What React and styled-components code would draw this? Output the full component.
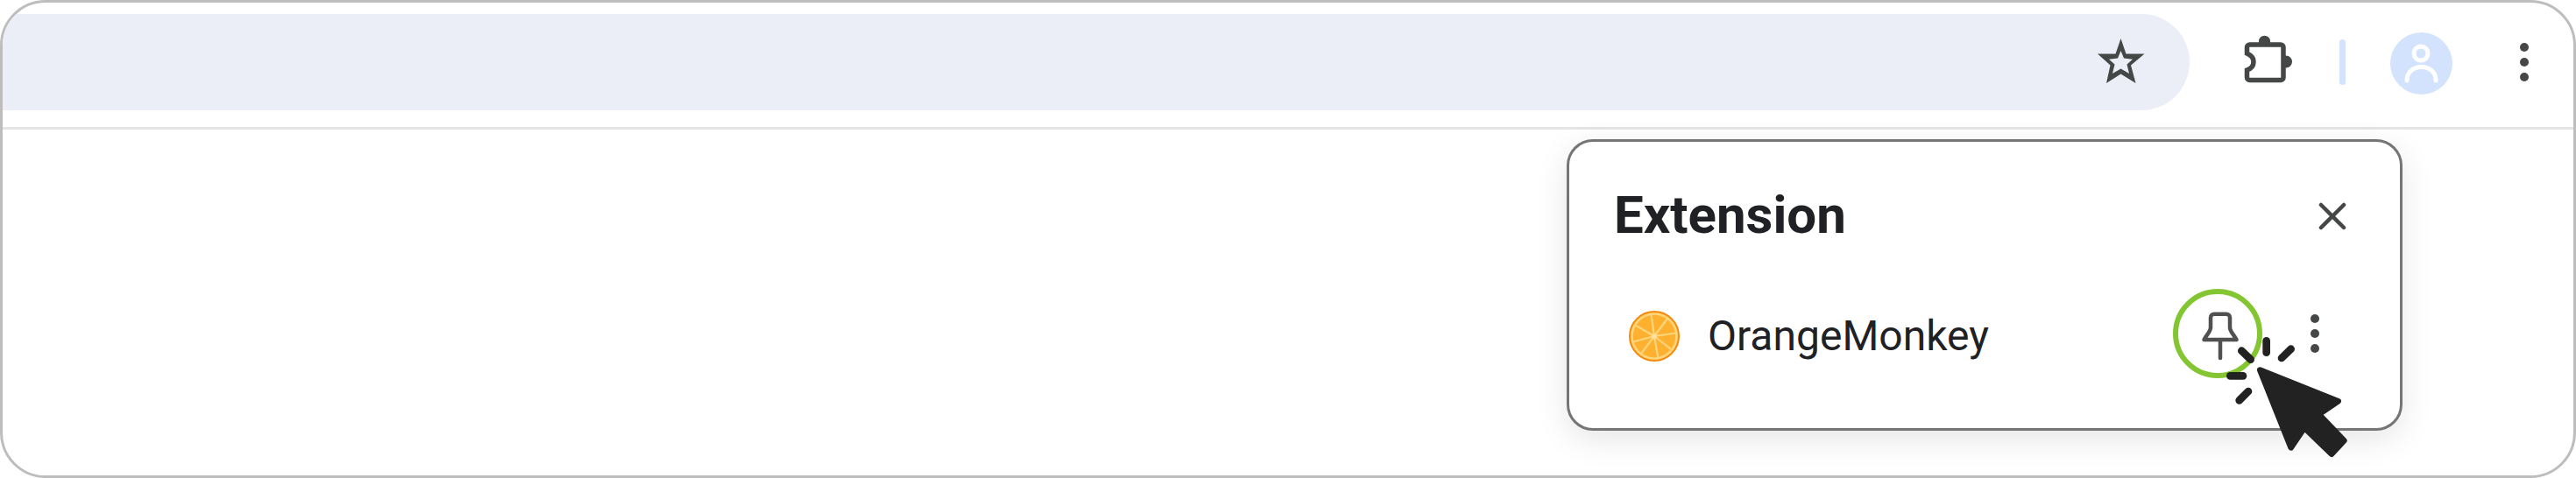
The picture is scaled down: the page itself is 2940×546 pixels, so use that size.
import styled, { createGlobalStyle } from "styled-components";

const GlobalStyle = createGlobalStyle`
 body {
  margin: 0;
  background: #fff;
  font-family: Roboto, "Liberation Sans", sans-serif;
 }
`;

const ORANGE_LINES = [-8, 37, 82, 128, 170, 217, 255, 300];
const SPARKS = [
 [355, 272, 386, 302],
 [440, 238, 440, 278],
 [492, 297, 524, 266],
 [316, 358, 360, 358],
 [347, 442, 378, 411],
];

const StarIcon = () => (
 <StarSvg viewBox="0 6 60 70">
  <path
   fillRule="evenodd"
   d="M30.5 14L36.5 31.5H57.5L42 44.5L47.5 65L30.5 54.5L14 65L18.5 44.5L4 31.5H24.5ZM30.5 28L27 36.5L17 37.7L23.5 43.5L21 54L30.5 48.5L40 54L37.5 43.5L44 37.7L34 36.5Z"
  />
 </StarSvg>
);

const PuzzleIcon = () => (
 <PuzzleSvg viewBox="0 1 90 80">
  <path
   className="shape"
   d="M27.5 21H63a3 3 0 0 1 3 3V58.5a3 3 0 0 1 -3 3H27.5a3 3 0 0 1 -3 -3V50C29 48.5 32 45.5 32 40.5C32 35.5 29 33 24.5 31V24a3 3 0 0 1 3 -3Z"
  />
  <path className="nub" d="M38 21V17.2a6.5 6.5 0 0 1 13 0V21Z" />
  <path className="nub" d="M66 33.5H69a7 7 0 0 1 0 14H66Z" />
 </PuzzleSvg>
);

const ProfileIcon = () => (
 <ProfileSvg viewBox="0 0 71 71">
  <circle cx="35" cy="24" r="8" />
  <path d="M19 55C19 45.5 26 39.5 35.5 39.5C45 39.5 52 45.5 52 55" />
 </ProfileSvg>
);

const OrangeIcon = () => (
 <OrangeSvg viewBox="0 0 60 60">
  <circle cx="30" cy="30" r="28" fill="#ffb02e" stroke="#f78a0c" strokeWidth="2" />
  <circle cx="30" cy="30" r="25.5" fill="none" stroke="#ffd67c" strokeWidth="2.6" />
  {ORANGE_LINES.map((deg) => {
   const rad = (deg * Math.PI) / 180;
   return (
    <line
     key={deg}
     x1="30"
     y1="30"
     x2={30 + 25 * Math.sin(rad)}
     y2={30 - 25 * Math.cos(rad)}
     stroke="#ffd67c"
     strokeWidth="2.2"
    />
   );
  })}
  <circle cx="30" cy="30" r="3" fill="#ffe09a" />
 </OrangeSvg>
);

const PinIcon = () => (
 <PinSvg viewBox="0 0 54 64">
  <path d="M23 9.7H37a4 4 0 0 1 4 4V25C41 30 45.5 33 48.5 39H11.5C14.5 33 19 30 19 25V13.7a4 4 0 0 1 4 -4Z" />
  <path d="M30 40V60" />
 </PinSvg>
);

const CloseIcon = () => (
 <CloseSvg viewBox="0 0 32 32">
  <path d="M3 3L29 29M29 3L3 29" />
 </CloseSvg>
);

const ClickCursor = () => (
 <CursorSvg viewBox="0 0 900 708">
  {SPARKS.map(([x1, y1, x2, y2]) => (
   <line key={`${x1}-${y1}`} x1={x1} y1={y1} x2={x2} y2={y2} className="spark" />
  ))}
  <path
   className="arrow"
   d="M418 338L686 445L620 490L706 580L663 626L570 536L524 604Z"
  />
 </CursorSvg>
);

const App = () => {
 return (
  <>
   <GlobalStyle />
   <BrowserWindow>
    <Toolbar>
     <Omnibox>
      <StarIcon />
     </Omnibox>
     <PuzzleIcon />
     <Separator />
     <Avatar>
      <ProfileIcon />
     </Avatar>
     <Dots $ml={77}>
      <span />
      <span />
      <span />
     </Dots>
    </Toolbar>
    <Content>
     <Popover>
      <PopoverHeader>
       <Title>Extension</Title>
       <CloseIcon />
      </PopoverHeader>
      <ExtensionRow>
       <OrangeIcon />
       <ExtensionName>OrangeMonkey</ExtensionName>
       <PinButton>
        <PinIcon />
       </PinButton>
       <Dots $ml={55}>
        <span />
        <span />
        <span />
       </Dots>
      </ExtensionRow>
      <ClickCursor />
     </Popover>
    </Content>
   </BrowserWindow>
  </>
 );
};

const BrowserWindow = styled.div`
 width: 2940px;
 height: 546px;
 box-sizing: border-box;
 border: 3px solid #bdbdbd;
 border-radius: 52px;
 overflow: hidden;
 background: #fff;
`;

const Toolbar = styled.div`
 display: flex;
 align-items: center;
 box-sizing: border-box;
 height: 145px;
 padding: 13px 0 19px;
 border-bottom: 3px solid #e5e5e5;
`;

const Omnibox = styled.div`
 display: flex;
 align-items: center;
 justify-content: flex-end;
 box-sizing: border-box;
 width: 2496px;
 height: 110px;
 padding-right: 49px;
 margin-right: 41px;
 background: #ebeef7;
 border-radius: 0 55px 55px 0;
`;

const StarSvg = styled.svg`
 width: 60px;
 height: 70px;
 fill: #444746;
`;

const PuzzleSvg = styled.svg`
 width: 90px;
 height: 80px;

 .shape {
  fill: #fff;
  stroke: #444746;
  stroke-width: 5.5;
 }

 .nub {
  fill: #444746;
 }
`;

const Separator = styled.div`
 width: 7px;
 height: 52px;
 margin-left: 40px;
 border-radius: 4px;
 background: #d3e3fd;
`;

const Avatar = styled.div`
 display: flex;
 width: 71px;
 height: 71px;
 margin: 2px 0 0 51px;
 border-radius: 50%;
 background: #d3e3fd;
`;

const ProfileSvg = styled.svg`
 width: 71px;
 height: 71px;
 fill: none;
 stroke: #fff;
 stroke-width: 5;
 stroke-linecap: round;
`;

const Dots = styled.div`
 display: flex;
 flex-direction: column;
 gap: 7px;
 margin-left: ${(p) => p.$ml}px;

 span {
  display: block;
  width: 10px;
  height: 10px;
  border-radius: 50%;
  background: #444746;
 }
`;

const Content = styled.div`
 display: flex;
 justify-content: flex-end;
 padding: 11px 195px 0 0;
`;

const Popover = styled.div`
 position: relative;
 box-sizing: border-box;
 width: 954px;
 height: 333px;
 border: 3px solid #757575;
 border-radius: 30px;
 background: #fff;
 box-shadow: 0 10px 36px rgba(0, 0, 0, 0.1);
`;

const PopoverHeader = styled.div`
 display: flex;
 align-items: center;
 justify-content: space-between;
 height: 82px;
 padding: 44px 61px 0 51px;
`;

const Title = styled.div`
 margin-top: -2px;
 font-size: 60px;
 font-weight: 700;
 line-height: 82px;
 color: #202124;
`;

const CloseSvg = styled.svg`
 width: 32px;
 height: 32px;
 fill: none;
 stroke: #444746;
 stroke-width: 4.5;
 stroke-linecap: round;
`;

const ExtensionRow = styled.div`
 display: flex;
 align-items: center;
 height: 102px;
 margin-top: 42px;
 padding: 0 92px 0 69px;
`;

const OrangeSvg = styled.svg`
 flex: none;
 width: 60px;
 height: 60px;
 margin: 6px 0 0 -2px;
`;

const ExtensionName = styled.div`
 flex: 1;
 margin: 6px 0 0 31px;
 font-size: 48px;
 line-height: 60px;
 color: #202124;
`;

const PinButton = styled.div`
 display: flex;
 align-items: center;
 justify-content: center;
 box-sizing: border-box;
 width: 102px;
 height: 102px;
 border: 6px solid #84c532;
 border-radius: 50%;
`;

const PinSvg = styled.svg`
 flex: none;
 width: 54px;
 height: 64px;
 fill: none;
 stroke: #505050;
 stroke-width: 4.5;
 stroke-linejoin: round;
 stroke-linecap: round;
`;

const CursorSvg = styled.svg`
 position: absolute;
 left: 649px;
 top: 148px;
 width: 300px;
 height: 236px;
 overflow: visible;

 .spark {
  stroke: #222;
  stroke-width: 26;
  stroke-linecap: round;
 }

 .arrow {
  fill: #222;
  stroke: #222;
  stroke-width: 20;
  stroke-linejoin: round;
 }
`;

export default App;
